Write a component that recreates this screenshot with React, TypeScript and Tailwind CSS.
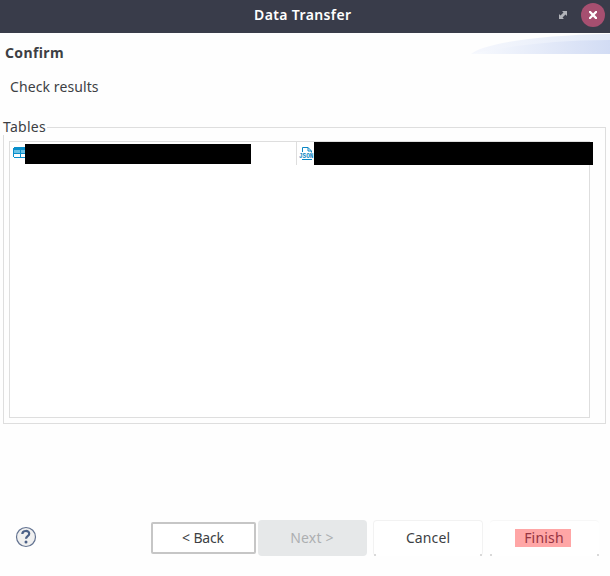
import React from "react";

function TableIcon() {
  return (
    <svg width="13" height="12" viewBox="0 0 13 12" shapeRendering="crispEdges" className="block">
      <path d="M1 0h12v11H1V10H0V1h1z" fill="#0a8fcb" />
      <path d="M1 3h6v3H1zM8 3h5v3H8z" fill="#6cc3e6" />
      <path d="M1 7h6v3H1zM8 7h5v3H8z" fill="#fff" />
    </svg>
  );
}

function JsonIcon() {
  return (
    <svg width="15" height="14" viewBox="0 0 15 14" className="block overflow-visible">
      <path d="M3.500 5V.5H9L12.500 4v1.500M9 .5V4h3M3 12.500h10" fill="none" stroke="#0b87c4" />
      <text x="0" y="11" fontSize="6.500" fontWeight="bold" textLength="14.500" lengthAdjust="spacingAndGlyphs" fill="#0b87c4" fontFamily="Liberation Mono, monospace">
        JSON
      </text>
    </svg>
  );
}

function HeaderSwoosh() {
  return (
    <svg width="140" height="20" viewBox="0 0 140 20" className="block">
      <defs>
        <linearGradient id="outer" x1="0" x2="1" y1="0" y2="0">
          <stop offset="0" stopColor="#f5f7fd" />
          <stop offset="1" stopColor="#e3eaf8" />
        </linearGradient>
        <linearGradient id="inner" x1="0" x2="1" y1="0" y2="0">
          <stop offset="0" stopColor="#f8fafe" />
          <stop offset="1" stopColor="#d2dcf4" />
        </linearGradient>
      </defs>
      <path d="M1 20C12 10 65 1 140 0v20z" fill="url(#outer)" />
      <path d="M1 20C35 13 80 6 140 6v14z" fill="url(#inner)" />
    </svg>
  );
}

function TitleBar() {
  return (
    <header className="flex h-[33px] items-start bg-[#393c4a]">
      <div className="w-[254px]" />
      <h1 className="mt-[5px] h-5 w-[303px] text-sm font-semibold leading-5 tracking-[0.38px] text-white">Data Transfer</h1>
      <svg width="12" height="12" viewBox="0 0 12 12" className="mt-[9px]">
        <path d="M5 2h5v5L8.500 5.500 7 7 5 5 6.500 3.500zM2 10V5l1.500 1.500L5 5l2 2-1.500 1.500L7 10z" fill="#b1b3b9" />
      </svg>
      <div className="ml-3 mt-[3px] flex size-6 items-center justify-center rounded-full bg-[#a64f70]">
        <svg width="8" height="8" viewBox="0 0 8 8">
          <path d="M.9.9l6.200 6.200M7.100.9L.9 7.100" stroke="#fff" strokeWidth="2.200" strokeLinecap="square" />
        </svg>
      </div>
    </header>
  );
}

/* Faint shadow left under the two bottom corners of a raised button. */
function CornerShadows() {
  return (
    <>
      <span className="absolute bottom-0 left-0 size-[2px] bg-[#d9d9d9]" />
      <span className="absolute bottom-0 right-0 size-[2px] bg-[#d9d9d9]" />
    </>
  );
}

export default function App() {
  return (
    <div className="flex h-[576px] w-[610px] flex-col overflow-hidden bg-[#fefefe] font-['Noto_Sans',sans-serif] text-sm leading-5 text-[#3d3f44]">
      <TitleBar />
      <section className="flex h-[86px] justify-between">
        <div>
          <h2 className="ml-[5px] mt-[10px] text-sm font-bold leading-5 tracking-[0.38px]">Confirm</h2>
          <p className="ml-[10px] mt-[14px] tracking-[0.1px]">Check results</p>
        </div>
        <div className="pt-px">
          <HeaderSwoosh />
        </div>
      </section>
      <fieldset className="ml-[3px] h-[305px] w-[603px] border border-[#dedede]">
        <legend className="-ml-px h-4 pr-px leading-4 tracking-[0.25px]">Tables</legend>
        <div className="ml-[5px] mt-[6px] h-[277px] w-[581px] border border-[#dedede] bg-white">
          <div className="flex h-[23px] w-[584px]">
            <div className="flex w-[286px] pl-[3px]">
              <div className="w-3 overflow-hidden pt-[5px]"><TableIcon /></div>
              <div className="mt-[2px] h-5 w-[226px] bg-black" />
            </div>
            <div className="w-px bg-[#dedede]" />
            <div className="w-[17px] pl-[2px] pt-[5px]"><JsonIcon /></div>
            <div className="h-[23px] w-[279px] shrink-0 bg-black" />
          </div>
        </div>
      </fieldset>
      <footer className="mt-[96px] flex h-9 items-center">
        <svg width="22" height="22" viewBox="0 0 22 22" className="-mt-[2px] ml-[15px] mr-[114px]">
          <circle cx="11" cy="11" r="9.500" fill="#f0f0f0" stroke="#637391" strokeWidth="1.200" />
          <path d="M7.300 8C7.500 4 14.300 4 14.200 7.800c0 2.500-3.200 2.300-3.200 5" fill="none" stroke="#4b6086" strokeWidth="2.200" />
          <circle cx="11" cy="16" r="1.500" fill="#4b6086" />
        </svg>
        <button className="h-8 w-[105px] rounded-[2px] border-2 border-[#c6c6c6] bg-white pr-px tracking-[-0.15px]">&lt; Back</button>
        <button className="ml-[2px] h-9 w-[109px] rounded-[4px] bg-[#e6e8e9] pr-px tracking-[0.2px] text-[#adafb1]">Next &gt;</button>
        <button className="relative ml-[6px] h-9 w-[110px] rounded-[4px] border border-b-0 border-[#f2f2f2] bg-white pb-[2px] tracking-[0.1px]">
          Cancel
          <CornerShadows />
        </button>
        <button className="relative ml-[7px] flex h-9 w-[109px] items-center justify-center rounded-[4px] border-t border-[#f7f7f7] bg-white pb-[2px] pr-1 text-[#963442]">
          <span className="h-[18px] w-14 bg-[#ffa6a6] pl-[3px] leading-[18px] tracking-[0.2px]">Finish</span>
          <CornerShadows />
        </button>
      </footer>
    </div>
  );
}
